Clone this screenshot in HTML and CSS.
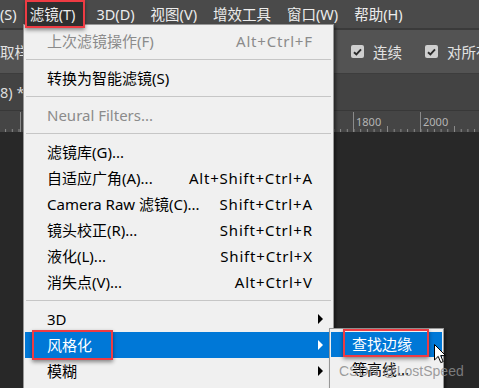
FILE: index.html
```html
<!DOCTYPE html>
<html lang="zh-CN">
<head>
    <meta charset="UTF-8">
    <meta name="viewport" content="width=device-width, initial-scale=1.0">
    <title>滤镜菜单</title>
    <link rel="stylesheet" href="styles.css">
</head>
<body>
    <div class="app">
        <!-- Menu bar -->
        <div class="menubar">
            <span class="mb-item">(S)</span>
            <span class="mb-item active">滤镜(T)</span>
            <span class="mb-item">3D(D)</span>
            <span class="mb-item">视图(V)</span>
            <span class="mb-item">增效工具</span>
            <span class="mb-item">窗口(W)</span>
            <span class="mb-item">帮助(H)</span>
        </div>

        <!-- Options bar -->
        <div class="options">
            <span class="opt-label">取样</span>
            <div class="checks">
                <span class="check"><span class="box"><svg width="9" height="8" viewBox="0 0 9 8"><path d="M1 4.2 L3.4 6.4 L8 1.4" fill="none" stroke="#2b2b2b" stroke-width="1.9"/></svg></span>连续</span>
                <span class="check"><span class="box"><svg width="9" height="8" viewBox="0 0 9 8"><path d="M1 4.2 L3.4 6.4 L8 1.4" fill="none" stroke="#2b2b2b" stroke-width="1.9"/></svg></span>对所有图层取样</span>
            </div>
        </div>

        <!-- Document tab -->
        <div class="tabs"><span class="tab-title">8) *</span></div>

        <!-- Ruler -->
        <div class="ruler">
            <svg width="479" height="21" viewBox="0 0 479 21">
                <defs>
                    <pattern id="ticks" x="353.5" y="0" width="6.7" height="21" patternUnits="userSpaceOnUse">
                        <line x1="0.5" y1="18" x2="0.5" y2="21" stroke="#8a8a8a" stroke-width="1"/>
                    </pattern>
                </defs>
                <rect x="0" y="0" width="479" height="21" fill="url(#ticks)"/>
                <line x1="20.5" y1="1" x2="20.5" y2="21" stroke="#8a8a8a"/>
                <line x1="353.5" y1="1" x2="353.5" y2="21" stroke="#8a8a8a"/>
                <line x1="420.5" y1="1" x2="420.5" y2="21" stroke="#8a8a8a"/>
                <line x1="387.5" y1="15" x2="387.5" y2="21" stroke="#8a8a8a"/>
                <line x1="454.5" y1="15" x2="454.5" y2="21" stroke="#8a8a8a"/>
                <text x="356" y="15" class="ruler-num">1800</text>
                <text x="423" y="15" class="ruler-num">2000</text>
            </svg>
        </div>

        <div class="canvas"></div>
    </div>

    <!-- Filter menu -->
    <div class="menu">
        <div class="mi disabled"><span>上次滤镜操作(F)</span><span class="key">Alt+Ctrl+F</span></div>
        <div class="sep"></div>
        <div class="mi"><span>转换为智能滤镜(S)</span></div>
        <div class="sep"></div>
        <div class="mi disabled"><span>Neural Filters...</span></div>
        <div class="sep"></div>
        <div class="mi"><span>滤镜库(G)...</span></div>
        <div class="mi"><span>自适应广角(A)...</span><span class="key">Alt+Shift+Ctrl+A</span></div>
        <div class="mi"><span>Camera Raw 滤镜(C)...</span><span class="key">Shift+Ctrl+A</span></div>
        <div class="mi"><span>镜头校正(R)...</span><span class="key">Shift+Ctrl+R</span></div>
        <div class="mi"><span>液化(L)...</span><span class="key">Shift+Ctrl+X</span></div>
        <div class="mi"><span>消失点(V)...</span><span class="key">Alt+Ctrl+V</span></div>
        <div class="sep"></div>
        <div class="mi sub"><span>3D</span><span class="arrow"></span></div>
        <div class="mi sub hover"><span>风格化</span><span class="arrow"></span><span class="mark"></span></div>
        <div class="mi sub"><span>模糊</span><span class="arrow"></span></div>
    </div>

    <!-- Stylize submenu -->
    <div class="submenu">
        <div class="si hover"><span>查找边缘</span><span class="mark"></span></div>
        <div class="si"><span>等高线...</span></div>
        <div class="si"><span>风...</span></div>
    </div>

    <div class="watermark">CSDN @LostSpeed</div>

    <svg class="cursor" width="13" height="20" viewBox="0 0 13 20">
        <path d="M0.5 0.5 L0.5 16 L4.2 12.4 L6.8 18.6 L9.2 17.6 L6.7 11.6 L11.6 11.6 Z" fill="#fff" stroke="#000" stroke-width="1"/>
    </svg>
</body>
</html>
```

FILE: styles.css
```css
* { box-sizing: border-box; }
html, body { margin: 0; height: 100%; overflow: hidden; }
body { font-family: "Noto Sans", "Noto Sans CJK SC", sans-serif; background: #282828; position: relative; }

.app { display: flex; flex-direction: column; height: 388px; }

/* photoshop chrome */
.menubar { height: 30px; display: flex; align-items: center; background: #4a4a4a; border-bottom: 2px solid #3a3a3a; color: #ededed; font-size: 14.5px; }
.mb-item { height: 28px; line-height: 28px; padding: 0 8px; white-space: nowrap; }
.mb-item:first-child { padding-left: 0; }
.mb-item.active { background: #2f2f2f; padding: 0 10px 0 5px; margin-right: 3px; box-shadow: inset 0 0 0 2px #ee3b43, 0 2px 4px rgba(0, 0, 0, 0.45); position: relative; z-index: 1; }

.options { height: 44px; display: flex; align-items: center; background: #535353; border-bottom: 1px solid #3d3d3d; color: #e2e2e2; font-size: 14.5px; white-space: nowrap; overflow: hidden; }
.checks { display: flex; gap: 23px; margin-left: 322px; }
.check { display: flex; align-items: center; gap: 9px; }
.box { width: 13px; height: 13px; border-radius: 2px; background: #cfcfcf; display: flex; align-items: center; justify-content: center; }

.tabs { height: 37px; display: flex; align-items: center; background: #434343; border-bottom: 1px solid #383838; color: #dcdcdc; font-size: 14.5px; }

.ruler { height: 21px; background: #454545; }
.ruler svg { display: block; }
.ruler-num { font-family: "Noto Sans", sans-serif; font-size: 11px; fill: #b4b4b4; }

.canvas { flex: 1; background: #282828; }

/* dropdown menu */
.menu { position: absolute; left: 23px; top: 24px; width: 311px; height: 380px; background: #f0f0f0; border: 1px solid #979797; box-shadow: 2px 2px 3px rgba(0, 0, 0, 0.45); padding: 3px 1px; font-size: 15px; color: #000; }
.mi { height: 26px; line-height: 26px; display: flex; align-items: center; justify-content: space-between; padding: 0 20px 0 22px; white-space: nowrap; position: relative; }
.mi .key { letter-spacing: 0.8px; margin-right: -0.8px; }
.mi.disabled { color: #8b8b8b; }
.mi.sub { padding-right: 9px; }
.mi.hover { background: #0078d7; color: #fff; }
.sep { height: 1px; background: #c6c6c6; margin: 5px 1px; }
.sep:nth-last-of-type(1) { margin: 6px 1px 7px; }
.arrow { width: 0; height: 0; border-left: 5px solid #000; border-top: 5px solid transparent; border-bottom: 5px solid transparent; }
.mi.hover .arrow { border-left-color: #fff; }
.mi .mark { position: absolute; left: 7px; top: -2px; width: 81px; height: 30px; border: 2px solid #ee3b43; box-shadow: 0 2px 4px rgba(0, 0, 0, 0.45); }

.submenu { position: absolute; left: 329px; top: 328px; width: 115px; height: 70px; background: #f0f0f0; border: 1px solid #979797; box-shadow: 2px 2px 3px rgba(0, 0, 0, 0.45); padding: 3px 1px; font-size: 15px; color: #000; }
.si { height: 25px; line-height: 25px; padding-left: 21px; position: relative; white-space: nowrap; }
.si.hover { background: #0078d7; color: #fff; }
.si .mark { position: absolute; left: 12px; top: -3px; width: 86px; height: 28px; border: 2px solid #ee3b43; box-shadow: 0 2px 4px rgba(0, 0, 0, 0.45); }

.watermark { position: absolute; left: 339px; top: 363px; font-family: "Liberation Sans", Arial, sans-serif; font-size: 14px; color: rgba(140, 140, 140, 0.85); white-space: nowrap; }
.cursor { position: absolute; left: 434px; top: 344px; }
```
